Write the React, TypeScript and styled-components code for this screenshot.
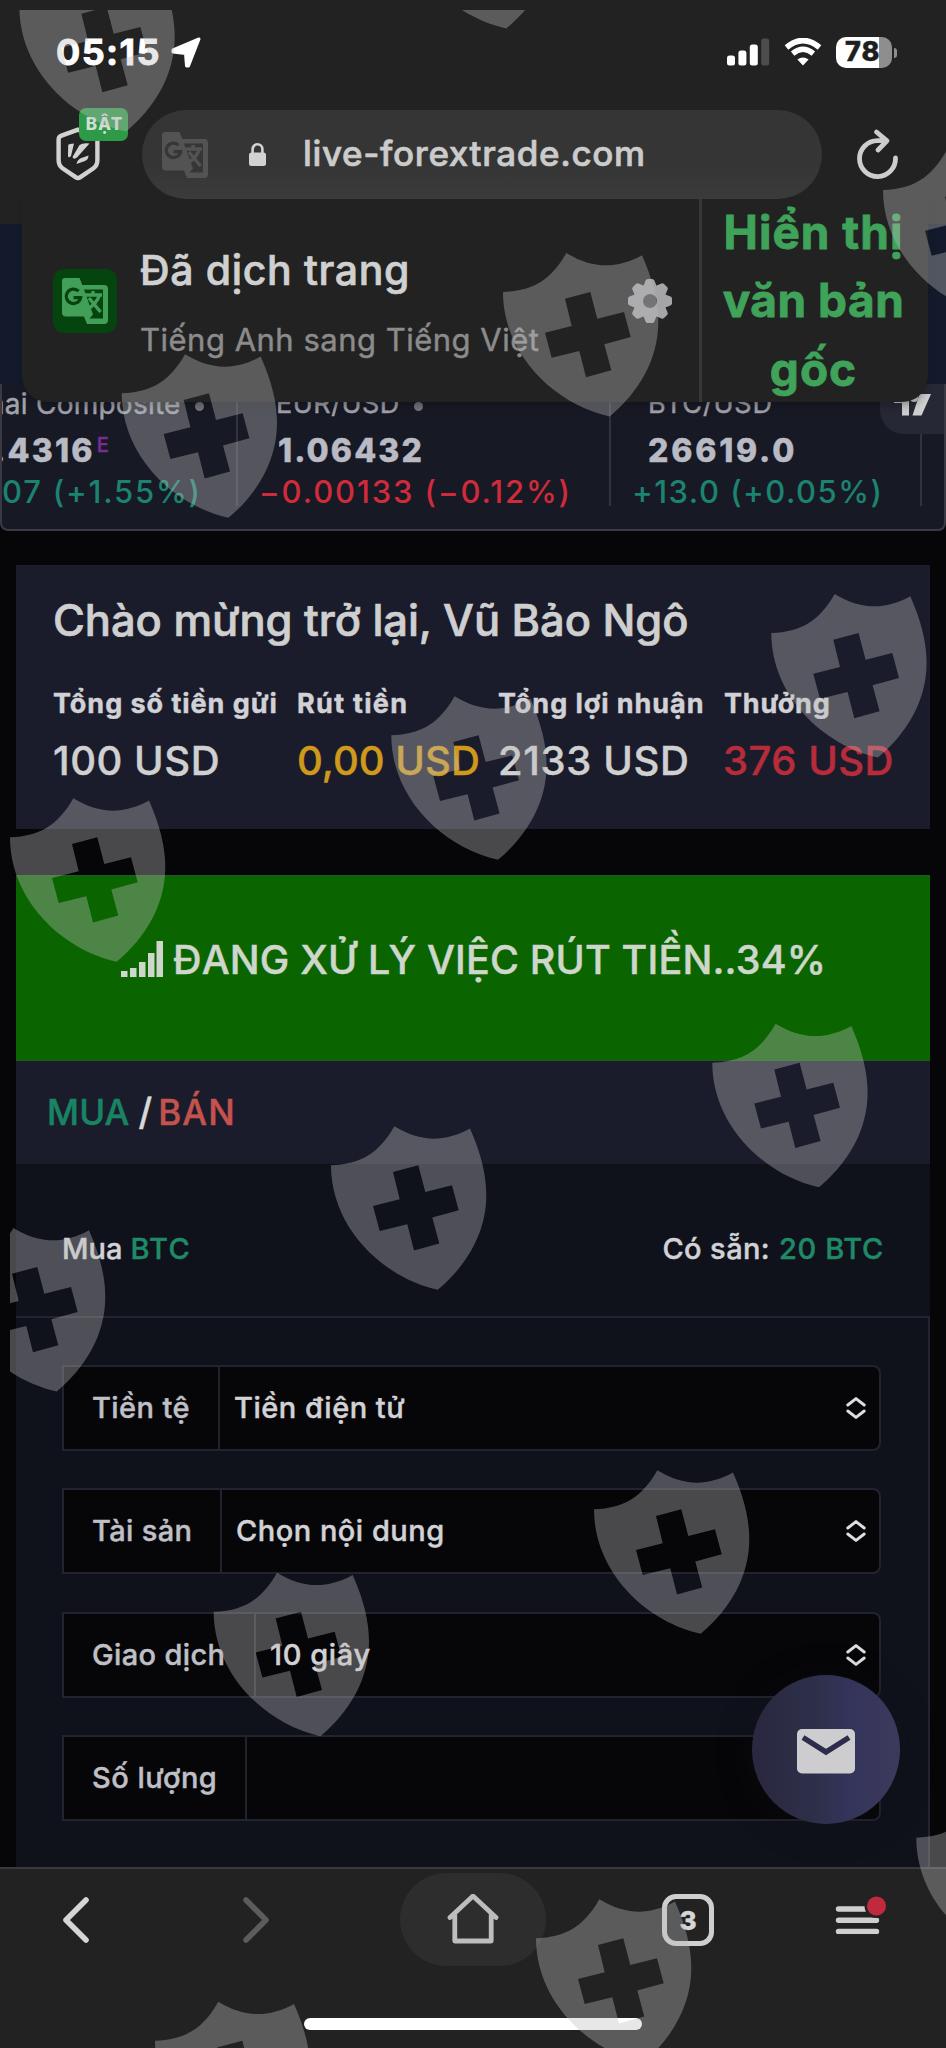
import React from "react";
import styled, { createGlobalStyle } from "styled-components";

const Global = createGlobalStyle`
  body { margin: 0; background: #060609; }
  * { box-sizing: border-box; }
`;

const Screen = styled.div`
  position: relative;
  display: flex;
  flex-direction: column;
  width: 946px;
  height: 2048px;
  overflow: hidden;
  background: #060609;
  font-family: Inter, "Liberation Sans", sans-serif;
`;

interface TextProps {
  $size: number;
  $weight?: number;
  $ls?: number;
  $color?: string;
  $lh?: number;
  $grade?: number;
}
const Text = styled.span<TextProps>`
  display: block;
  white-space: pre;
  font-size: ${(p) => p.$size}px;
  font-weight: ${(p) => p.$weight ?? 500};
  letter-spacing: ${(p) => p.$ls ?? 0}px;
  line-height: ${(p) => p.$lh ?? 40}px;
  color: ${(p) => p.$color ?? "#d2d2d6"};
  -webkit-text-stroke: ${(p) => p.$grade ?? 0.45}px currentColor;
`;

/* ---------- browser chrome, top ---------- */

const BrowserTop = styled.header`
  flex: none;
  height: 224px;
  background: #222;
`;
const StatusBar = styled.div`
  display: flex;
  align-items: center;
  height: 110px;
  padding: 0 54px 6px 56px;
`;
const LocationIcon = styled.svg`
  margin-left: 10px;
`;
const Indicators = styled.div`
  display: flex;
  align-items: center;
  gap: 14px;
  margin-left: auto;
`;
const Battery = styled.div`
  position: relative;
  display: flex;
  align-items: center;
  padding-left: 9px;
  width: 56px;
  height: 31px;
  border-radius: 10px;
  background: linear-gradient(90deg, #fff 43.5px, #8e8e8e 43.5px);
  &::after {
    content: "";
    position: absolute;
    right: -5px;
    top: 11px;
    width: 3px;
    height: 10px;
    border-radius: 0 3px 3px 0;
    background: #8e8e8e;
  }
`;
const AddressRow = styled.div`
  display: flex;
  height: 89px;
  padding-left: 56px;
`;
const ShieldButton = styled.div`
  position: relative;
  width: 44px;
  padding-top: 17px;
`;
const OnBadge = styled.div`
  position: absolute;
  left: 23px;
  top: -2px;
  display: flex;
  justify-content: center;
  width: 49px;
  height: 33px;
  padding-left: 2px;
  border-radius: 7px;
  background: #2c9a47;
`;
const UrlPill = styled.div`
  position: relative;
  z-index: 2;
  display: flex;
  align-items: center;
  width: 680px;
  height: 89px;
  margin-left: 42px;
  padding-left: 20px;
  border-radius: 45px;
  background: linear-gradient(#353535 60%, #3b3b3b);
`;
const Address = styled.div`
  margin-bottom: 4px;
`;
const LockIcon = styled.svg`
  margin: 0 37px 0 41px;
`;
const ReloadIcon = styled.svg`
  margin: 18px 0 0 34px;
`;

/* ---------- translation toast ---------- */

const Toast = styled.div`
  position: absolute;
  left: 22px;
  top: 199px;
  z-index: 1;
  display: flex;
  align-items: center;
  width: 906px;
  height: 203px;
  padding-left: 31px;
  border-radius: 0 0 26px 26px;
  background: #222;
  box-shadow: 0 6px 8px -2px rgba(14, 14, 18, 0.35);
`;
const TranslateBadge = styled.div`
  display: flex;
  align-items: center;
  justify-content: center;
  width: 64px;
  height: 64px;
  border-radius: 11px;
  background: #05440f;
`;
const ToastBody = styled.div`
  display: flex;
  flex-direction: column;
  gap: 25px;
  width: 488px;
  margin: 4px 0 0 23px;
`;
const ToastAction = styled.div`
  align-self: stretch;
  display: flex;
  flex-direction: column;
  align-items: center;
  justify-content: center;
  width: 227px;
  margin-left: 27px;
  padding-right: 1px;
  border-left: 3px solid #373739;
`;

/* ---------- page ---------- */

const Page = styled.main`
  flex: none;
  height: 1643px;
  overflow: hidden;
`;
const Strip = styled.div`
  height: 160px;
  background: #131a2b;
`;
const Ticker = styled.div`
  position: relative;
  display: flex;
  height: 147px;
  overflow: hidden;
  border: solid #393a43;
  border-width: 0 2px 2px;
  border-radius: 0 0 8px 8px;
  background: #171925;
`;
const Quote = styled.div<{ $width: number; $pad: number }>`
  flex: none;
  width: ${(p) => p.$width}px;
  height: 122px;
  padding-left: ${(p) => p.$pad}px;
  border-right: 2px solid #32333f;
`;
const QuoteName = styled.div<{ $shift: number }>`
  display: flex;
  align-items: center;
  gap: 14px;
  margin: 0 0 0 ${(p) => p.$shift}px;
`;
const Dot = styled.i`
  width: 9px;
  height: 9px;
  margin-top: 5px;
  border-radius: 50%;
  background: #77787f;
`;
const QuotePrice = styled.div<{ $shift: number }>`
  display: flex;
  gap: 2px;
  margin: 7px 0 1px ${(p) => p.$shift}px;
`;
const TvBadge = styled.div`
  position: absolute;
  right: -2px;
  top: 0;
  width: 66px;
  height: 50px;
  padding: 10px 0 0 14px;
  border-radius: 0 0 0 24px;
  background: #272835;
`;

const Welcome = styled.section`
  height: 264px;
  margin: 34px 16px 46px;
  padding: 25px 0 0 36px;
  background: #1b1c2b;
`;
const Stats = styled.div`
  display: grid;
  grid-template-columns: 244px 201px 226px 1fr;
  margin-top: 34px;
  row-gap: 17px;
`;
const Inset = styled.div<{ $x: number }>`
  margin-left: ${(p) => p.$x}px;
`;

const Progress = styled.section`
  display: flex;
  align-items: flex-start;
  gap: 10px;
  height: 186px;
  margin: 0 16px;
  padding: 64px 0 0 105px;
  border: solid #1c5c1c;
  border-width: 1px 0;
  background: #0a6500;
`;
const Card = styled.section`
  margin: 0 16px;
  background: #0f111b;
`;
const CardHead = styled.div`
  display: flex;
  height: 103px;
  padding: 31px 0 0 30px;
  background: #1b1c2b;
`;
const Balance = styled.div`
  display: flex;
  height: 152px;
  padding: 65px 46px 0 46px;
`;
const Available = styled.div`
  display: flex;
  gap: 9px;
  margin-left: auto;
`;
const Form = styled.div`
  display: flex;
  flex-direction: column;
  gap: 37.3px;
  height: 560px;
  padding: 47px 47px 0 46px;
  border: solid #23242f;
  border-width: 2px 2px 0 0;
`;
const Field = styled.div`
  display: flex;
  align-items: stretch;
  height: 86px;
  flex: none;
  border: 2px solid #22232e;
  border-radius: 0 8px 8px 0;
  background: #060609;
`;
const FieldLabel = styled.div<{ $width: number }>`
  display: flex;
  align-items: center;
  width: ${(p) => p.$width}px;
  padding-left: 28px;
  border-right: 2px solid #22232e;
`;
const FieldValue = styled.div`
  flex: 1;
  display: flex;
  align-items: center;
  justify-content: space-between;
  padding: 0 13px 0 14px;
`;

const MailButton = styled.button`
  position: absolute;
  left: 752px;
  top: 1675px;
  display: flex;
  align-items: center;
  justify-content: center;
  width: 148px;
  height: 149px;
  padding: 3px 0 0;
  border: 0;
  border-radius: 50%;
  background: linear-gradient(90deg, #2a2740, #2d2f48 40%, #34335a 65%, #3c3a5c);
  box-shadow: 0 4px 36px rgba(20, 20, 24, 0.3);
`;

/* ---------- browser chrome, bottom ---------- */

const BrowserBottom = styled.footer`
  flex: none;
  height: 181px;
  border-top: 2px solid #39383d;
  background: #222;
`;
const NavRow = styled.nav`
  display: grid;
  grid-template-columns: 151px 210px 224px 206px 132px;
  place-items: center;
  height: 101px;
`;
const HomePill = styled.div`
  display: flex;
  align-items: center;
  justify-content: center;
  width: 146px;
  height: 93px;
  border-radius: 47px;
  background: #2d2d2d;
`;
const TabCount = styled.div`
  display: flex;
  align-items: center;
  justify-content: center;
  width: 52px;
  height: 52px;
  padding-top: 2px;
  border: 5px solid #cfcfcf;
  border-radius: 14px;
`;
const HomeIndicator = styled.div`
  width: 338px;
  height: 12px;
  margin: 48px auto 0;
  border-radius: 6px;
  background: #fff;
`;
const Overlay = styled.svg`
  position: absolute;
  left: 0;
  top: 0;
  z-index: 5;
  pointer-events: none;
`;

const TranslateGlyph = ({ fg, bg }: { fg: string; bg: string }) => (
  <svg width="46" height="46" viewBox="0 0 46 46" fill="none">
    <path d="M3 0H17.5L20.3 7H42Q46 7 46 11V42Q46 46 42 46H25L22 38.5H4Q0 38.5 0 34.5V3Q0 0 3 0Z" fill={fg} />
    <path d="M22 11.5H41V40.5H27.5L31 36.5Z" fill={bg} />
    <path d="M22 17H40M31 13V17M37.5 17Q35 25 26 31M27 20L38.5 34" stroke={fg} strokeWidth="3.4" />
    <path d="M16.6 13.2A7.2 7.2 0 1 0 18.6 19.6H11.6" stroke={bg} strokeWidth="3.2" />
  </svg>
);

const UpDown = () => (
  <svg width="20" height="22" viewBox="0 0 20 22" fill="none" stroke="#dededf" strokeWidth="2.9" strokeLinecap="round" strokeLinejoin="round">
    <path d="M1.8 8L10 1.6L18.2 8M1.8 14L10 20.4L18.2 14" />
  </svg>
);

const gearTeeth = [0, 45, 90, 135, 180, 225, 270, 315];
const Gear = () => (
  <svg width="44" height="44" viewBox="-22 -22 44 44" fill="#a4a4a9">
    {gearTeeth.map((a) => (
      <path key={a} transform={`rotate(${a})`} d="M-7 -14L-4.4 -20.5Q-3.8 -22 -2.2 -22H2.2Q3.8 -22 4.4 -20.5L7 -14Z" />
    ))}
    <circle r="16.5" />
    <circle r="7" fill="#4a4a4c" />
  </svg>
);

const shields: [number, number][] = [
  [19.4, 7], [399.6, -96], [883, 190], [503, 292], [121.7, 393.3], [771.3, 633],
  [391.3, 735.3], [10, 837.3], [712.3, 1062.7], [331, 1165.3], [-50, 1267],
  [594, 1509.3], [213.7, 1611.7], [916.3, 1837.7], [536, 1938.3], [155, 2040.7],
];
const shieldPath =
  "M0 0C30 -1 48 -12 63.3 -39C88 -24 112 -22 139 -36.7C150 -12 155.3 10 155.3 30C155.3 68 135 101 106.7 124.5C51 112 0 62 0 0Z" +
  "M62 6.7L68.7 34L42 40.7L48.7 65.7L76.3 59L83 85.3L108.3 78.3L101.3 52.3L127.7 45L121 20L94.3 26.7L87.3 0Z";

const quoteGreen = "#1c8370";
const quoteRed = "#d02b3a";
const tradeGreen = "#1f8a68";

const fields = [
  { label: "Tiền tệ", ls: 0.4, width: 156, value: "Tiền điện tử", vls: 0.5, select: true },
  { label: "Tài sản", ls: 0.35, width: 158, value: "Chọn nội dung", vls: 0.5, select: true },
  { label: "Giao dịch", ls: 0.35, width: 192, value: "10 giây", vls: 0.6, select: true },
  { label: "Số lượng", ls: 0.5, width: 183, value: "", vls: 0, select: false },
];

export default function App() {
  return (
    <Screen>
      <Global />
      <BrowserTop>
        <StatusBar>
          <Text $size={36} $weight={700} $ls={1.4} $grade={0.9} $color="#fff">05:15</Text>
          <LocationIcon width="30" height="31" viewBox="0 0 30 31" fill="#fff" stroke="#fff" strokeWidth="3" strokeLinejoin="round">
            <path d="M28 2L17.5 29H15.5L14.5 16.5L2 15V13Z" />
          </LocationIcon>
          <Indicators>
            <svg width="43" height="28" viewBox="0 0 43 28" fill="#fff">
              <rect x="0" y="17.5" width="8" height="10" rx="2.5" />
              <rect x="11.4" y="12.5" width="8" height="15" rx="2.5" />
              <rect x="22.8" y="6.5" width="8" height="21" rx="2.5" />
              <rect x="34.2" y="0.5" width="8" height="27" rx="2.5" fill="#4d4d4d" />
            </svg>
            <svg width="38" height="28" viewBox="0 0 38 28" fill="none" stroke="#fff">
              <path d="M2.5 9.5Q19 -4.5 35.5 9.5" strokeWidth="5.6" />
              <path d="M8.6 15.6Q19 7 29.4 15.6" strokeWidth="5.4" />
              <path d="M19 27.5L13.4 21.6Q19 17.4 24.6 21.6Z" fill="#fff" stroke="none" />
            </svg>
            <Battery>
              <Text $size={27} $weight={800} $ls={1} $color="#1e1e1e">78</Text>
            </Battery>
          </Indicators>
        </StatusBar>
        <AddressRow>
          <ShieldButton>
            <svg width="44" height="54" viewBox="0 0 44 54" fill="none">
              <path d="M22 2.6L38.5 8.6Q41.4 9.6 41.4 12.5V33Q41.4 38.5 37.5 41.2L24 50.4Q22 51.8 20 50.4L6.5 41.2Q2.6 38.5 2.6 33V12.5Q2.6 9.6 5.5 8.6Z" stroke="#d2d2d2" strokeWidth="4.4" strokeLinejoin="round" />
              <path d="M12.2 18Q13.5 16.5 18 16.5L15 29Q12.5 31.5 12 29ZM23.5 18Q27 15.5 33.5 16.5L21 30.5Q17.5 33 16.5 30ZM24 31.5L32.5 28.5Q32.5 32.5 29 34L20.5 37Q21.5 33 24 31.5Z" fill="#d2d2d2" />
            </svg>
            <OnBadge>
              <Text $size={17} $weight={800} $ls={1.1} $lh={33} $grade={0} $color="#d3ddd5">BẬT</Text>
            </OnBadge>
          </ShieldButton>
          <UrlPill>
            <TranslateGlyph fg="#535353" bg="#363636" />
            <LockIcon width="17" height="24" viewBox="0 0 17 24">
              <rect y="9.5" width="17" height="13.5" rx="2.5" fill="#d2d2d2" />
              <path d="M3.6 10V6.2A4.9 4.9 0 0 1 13.4 6.2V10" fill="none" stroke="#d2d2d2" strokeWidth="2.6" />
            </LockIcon>
            <Address>
              <Text $size={35} $ls={0.65} $grade={0.7} $color="#cbcbcb">live-forextrade.com</Text>
            </Address>
          </UrlPill>
          <ReloadIcon width="44" height="54" viewBox="0 0 44 54" fill="none" stroke="#cdcdcd" strokeWidth="4.8" strokeLinecap="round" strokeLinejoin="round">
            <path d="M39.5 30A18 18 0 1 1 21.5 12.6H30M20.5 4L31 12.8L22 22" />
          </ReloadIcon>
        </AddressRow>
      </BrowserTop>

      <Page>
        <Strip />
        <Ticker>
          <Quote $width={236} $pad={0}>
            <QuoteName $shift={-14}>
              <Text $size={28} $weight={400} $ls={0.25} $color="#a2a3ab">hai Composite</Text>
              <Dot />
            </QuoteName>
            <QuotePrice $shift={-8}>
              <Text $size={32} $weight={800} $ls={2.2} $color="#b9bac4">.4316</Text>
              <Text $size={20} $weight={500} $lh={29} $color="#772d91">E</Text>
            </QuotePrice>
            <Text $size={31} $ls={1.8} $grade={0} $color={quoteGreen}>07 (+1.55%)</Text>
          </Quote>
          <Quote $width={373} $pad={21}>
            <QuoteName $shift={17}>
              <Text $size={27} $weight={400} $ls={0.5} $color="#a2a3ab">EUR/USD</Text>
              <Dot />
            </QuoteName>
            <QuotePrice $shift={19}>
              <Text $size={32} $weight={800} $ls={2.1} $color="#b9bac4">1.06432</Text>
            </QuotePrice>
            <Text $size={31} $ls={1.9} $grade={0} $color={quoteRed}>−0.00133 (−0.12%)</Text>
          </Quote>
          <Quote $width={311} $pad={21}>
            <QuoteName $shift={16}>
              <Text $size={27} $weight={400} $ls={0.8} $color="#a2a3ab">BTC/USD</Text>
            </QuoteName>
            <QuotePrice $shift={16}>
              <Text $size={32} $weight={800} $ls={2.8} $color="#b9bac4">26619.0</Text>
            </QuotePrice>
            <Text $size={31} $ls={1.5} $grade={0} $color={quoteGreen}>+13.0 (+0.05%)</Text>
          </Quote>
          <TvBadge>
            <svg width="38" height="22" viewBox="0 0 38 22" fill="#cfcfcf">
              <path d="M0 0H15V21.5H8V9H0ZM25.5 0H37L27.5 21.5H18.5Z" />
              <circle cx="20" cy="4" r="4" />
            </svg>
          </TvBadge>
        </Ticker>

        <Welcome>
          <Inset $x={1}>
            <Text $size={43.5} $lh={60} $ls={-0.05} $grade={0.7} $color="#cfcfcf">Chào mừng trở lại, Vũ Bảo Ngô</Text>
          </Inset>
          <Stats>
            <Inset $x={1}><Text $size={27} $weight={700} $ls={0.95}>Tổng số tiền gửi</Text></Inset>
            <Inset $x={1}><Text $size={27} $weight={700} $ls={1.3}>Rút tiền</Text></Inset>
            <Inset $x={1}><Text $size={27} $weight={700} $ls={0.95}>Tổng lợi nhuận</Text></Inset>
            <Inset $x={1}><Text $size={27} $weight={700} $ls={0.85}>Thưởng</Text></Inset>
            <Inset $x={1}><Text $size={40} $ls={0.55} $color="#d0d0d0">100 USD</Text></Inset>
            <Inset $x={1}><Text $size={40} $ls={0.05} $color="#cf9a1c">0,00 USD</Text></Inset>
            <Inset $x={1}><Text $size={40} $ls={0.65} $color="#d0d0d0">2133 USD</Text></Inset>
            <Inset $x={0}><Text $size={40} $ls={0.5} $color="#b62c3b">376 USD</Text></Inset>
          </Stats>
        </Welcome>

        <Progress>
          <svg width="42" height="37" viewBox="0 0 42 37" fill="#cfd6cb">
            <path d="M0 31H6.5V37H0ZM9 28H15.5V37H9ZM18 22H24.5V37H18ZM27 13H33.5V37H27ZM35.5 1H42V37H35.5Z" />
          </svg>
          <Text $size={39.5} $ls={0.16} $color="#cfd6cb">ĐANG XỬ LÝ VIỆC RÚT TIỀN..34%</Text>
        </Progress>

        <Card>
          <CardHead>
            <Inset $x={1}><Text $size={35} $ls={0.2} $color="#188463">MUA</Text></Inset>
            <Inset $x={9}><Text $size={37} $color="#d9d9d9">/</Text></Inset>
            <Inset $x={6}><Text $size={35} $ls={1.1} $color="#c4524e">BÁN</Text></Inset>
          </CardHead>
          <Balance>
            <Text $size={29} $ls={0}>Mua</Text>
            <Inset $x={8}><Text $size={29} $ls={1.3} $color={tradeGreen}>BTC</Text></Inset>
            <Available>
              <Text $size={29} $ls={0.4}>Có sẵn:</Text>
              <Text $size={29} $ls={0.65} $color={tradeGreen}>20 BTC</Text>
            </Available>
          </Balance>
          <Form>
            {fields.map((f) => (
              <Field key={f.label}>
                <FieldLabel $width={f.width}>
                  <Text $size={29} $ls={f.ls} $color="#bfbfc5">{f.label}</Text>
                </FieldLabel>
                <FieldValue>
                  <Text $size={29} $ls={f.vls}>{f.value}</Text>
                  {f.select && <UpDown />}
                </FieldValue>
              </Field>
            ))}
          </Form>
        </Card>
      </Page>

      <BrowserBottom>
        <NavRow>
          <svg width="30" height="48" viewBox="0 0 30 48" fill="none" stroke="#d6d6d6" strokeWidth="5.6" strokeLinecap="round" strokeLinejoin="round">
            <path d="M25 4L5 24L25 44" />
          </svg>
          <svg width="30" height="48" viewBox="0 0 30 48" fill="none" stroke="#5c5c5c" strokeWidth="5.6" strokeLinecap="round" strokeLinejoin="round">
            <path d="M5 4L25 24L5 44" />
          </svg>
          <HomePill>
            <svg width="52" height="52" viewBox="0 0 52 52" fill="none" stroke="#bdbdbd" strokeWidth="4.8" strokeLinecap="round" strokeLinejoin="round">
              <path d="M3 23.5L26 2L49 23.5M7.8 21V47H44.2V21" />
            </svg>
          </HomePill>
          <TabCount>
            <Text $size={26} $weight={800} $color="#d6d6d6">3</Text>
          </TabCount>
          <svg width="60" height="48" viewBox="-4 0 60 48">
            <path d="M7.5 13H45.5M7.5 24.2H45.5M7.5 35.4H45.5" stroke="#cfcfcf" strokeWidth="5.4" strokeLinecap="round" />
            <circle cx="45.5" cy="10" r="12" fill="#222" />
            <circle cx="45.5" cy="10" r="9.5" fill="#c12a3d" />
          </svg>
        </NavRow>
        <HomeIndicator />
      </BrowserBottom>

      <Toast>
        <TranslateBadge>
          <TranslateGlyph fg="#429f57" bg="#05440f" />
        </TranslateBadge>
        <ToastBody>
          <Text $size={41} $ls={0.65} $lh={50} $grade={0.7} $color="#d0d0d0">Đã dịch trang</Text>
          <Text $size={31} $weight={400} $ls={0.5} $color="#8b8b8c">Tiếng Anh sang Tiếng Việt</Text>
        </ToastBody>
        <Gear />
        <ToastAction>
          <Text $size={46} $weight={700} $ls={1} $lh={68.5} $grade={0.8} $color="#3fa35a">Hiển thị</Text>
          <Text $size={46} $weight={700} $ls={0.5} $lh={68.5} $grade={0.8} $color="#3fa35a">văn bản</Text>
          <Text $size={46} $weight={700} $ls={1} $lh={68.5} $grade={0.8} $color="#3fa35a">gốc</Text>
        </ToastAction>
      </Toast>

      <MailButton aria-label="Mail">
        <svg width="58" height="45" viewBox="0 0 58 45">
          <rect width="58" height="44.5" rx="5" fill="#cdccce" />
          <path d="M6 8.5L29 23L52 8.5" fill="none" stroke="#2c2c4c" strokeWidth="5.4" />
        </svg>
      </MailButton>

      <Overlay width="946" height="2048" viewBox="0 0 946 2048">
        <clipPath id="frame">
          <rect x="10" y="10" width="936" height="2038" />
        </clipPath>
        <g clipPath="url(#frame)" fill="#bebebe" fillOpacity="0.37" fillRule="evenodd">
          {shields.map(([x, y]) => (
            <path key={`${x},${y}`} transform={`translate(${x} ${y})`} d={shieldPath} />
          ))}
        </g>
      </Overlay>
    </Screen>
  );
}
